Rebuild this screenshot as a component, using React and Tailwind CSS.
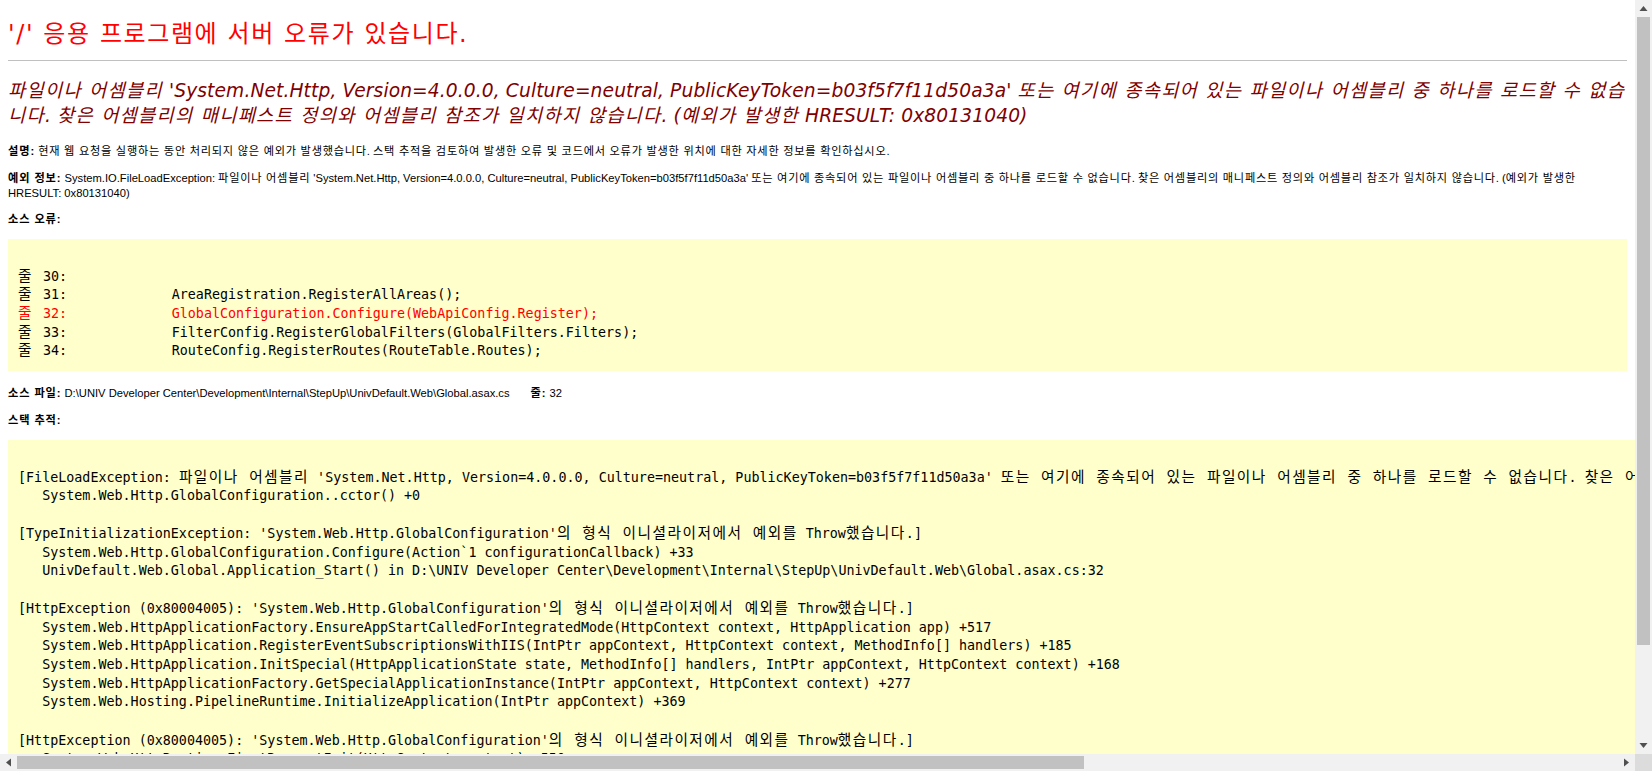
import { Fragment } from "react"

const sourceLines = [
  { text: "줄 30:  " },
  { text: "줄 31:             AreaRegistration.RegisterAllAreas();" },
  { text: "줄 32:             GlobalConfiguration.Configure(WebApiConfig.Register);", error: true },
  { text: "줄 33:             FilterConfig.RegisterGlobalFilters(GlobalFilters.Filters);" },
  { text: "줄 34:             RouteConfig.RegisterRoutes(RouteTable.Routes);" },
]

const stackLines = [
  "[FileLoadException: 파일이나 어셈블리 'System.Net.Http, Version=4.0.0.0, Culture=neutral, PublicKeyToken=b03f5f7f11d50a3a' 또는 여기에 종속되어 있는 파일이나 어셈블리 중 하나를 로드할 수 없습니다. 찾은 어셈블리의 매니페스트 정의와 어셈블리 참조가 일치하지 않습니다. (예외가 발생한 HRESULT: 0x80131040)]",
  "   System.Web.Http.GlobalConfiguration..cctor() +0",
  "",
  "[TypeInitializationException: 'System.Web.Http.GlobalConfiguration'의 형식 이니셜라이저에서 예외를 Throw했습니다.]",
  "   System.Web.Http.GlobalConfiguration.Configure(Action`1 configurationCallback) +33",
  "   UnivDefault.Web.Global.Application_Start() in D:\\UNIV Developer Center\\Development\\Internal\\StepUp\\UnivDefault.Web\\Global.asax.cs:32",
  "",
  "[HttpException (0x80004005): 'System.Web.Http.GlobalConfiguration'의 형식 이니셜라이저에서 예외를 Throw했습니다.]",
  "   System.Web.HttpApplicationFactory.EnsureAppStartCalledForIntegratedMode(HttpContext context, HttpApplication app) +517",
  "   System.Web.HttpApplication.RegisterEventSubscriptionsWithIIS(IntPtr appContext, HttpContext context, MethodInfo[] handlers) +185",
  "   System.Web.HttpApplication.InitSpecial(HttpApplicationState state, MethodInfo[] handlers, IntPtr appContext, HttpContext context) +168",
  "   System.Web.HttpApplicationFactory.GetSpecialApplicationInstance(IntPtr appContext, HttpContext context) +277",
  "   System.Web.Hosting.PipelineRuntime.InitializeApplication(IntPtr appContext) +369",
  "",
  "[HttpException (0x80004005): 'System.Web.Http.GlobalConfiguration'의 형식 이니셜라이저에서 예외를 Throw했습니다.]",
  "   System.Web.HttpRuntime.FirstRequestInit(HttpContext context) +550",
]

// the hangul in the reference is wider than Noto's, so runs of it get their own tracking
const Ko = ({ text, className }) =>
  text.split(/([\uac00-\ud7a3]+(?:\s+[\uac00-\ud7a3]+)*)/).map((part, i) =>
    i % 2 === 1 ? (
      <span key={i} className={className}>
        {part}
      </span>
    ) : (
      <Fragment key={i}>{part}</Fragment>
    )
  )

const CodeBlock = ({ lines, koClass, className }) => (
  <div className={`bg-[#ffffcc] pl-[10px] pt-[28px] font-['DejaVu_Sans_Mono','Noto_Sans_CJK_KR',monospace] text-[13.36px] ${className}`}>
    {lines.map((line, i) => (
      <div
        key={i}
        className={`leading-[18.67px] whitespace-pre ${line.tall ? "h-[19.3px]" : "h-[18.67px]"} ${line.error ? "text-[#ff0000]" : "text-black"}`}
      >
        <Ko text={line.text} className={koClass} />
      </div>
    ))}
  </div>
)

const Small = ({ label, text }) => (
  <>
    <b className="font-bold tracking-[0.9px]">{label}</b> <Ko text={text} className="tracking-[0.74px]" />
  </>
)

const Arrow = ({ d }) => (
  <svg width="9" height="9" viewBox="0 0 9 9" className="fill-[#505050]">
    <path d={d} />
  </svg>
)

export default function App() {
  return (
    <div className="flex flex-col h-screen w-full overflow-hidden bg-white font-['Liberation_Sans','Noto_Sans_CJK_KR',sans-serif] text-black">
      <div className="flex flex-1 min-h-0">
        <div className="flex-1 min-w-0 overflow-hidden px-2 pt-[20px]">
          <h1 className="font-['DejaVu_Sans','Noto_Sans_CJK_KR',sans-serif] text-[24px] leading-[28px] tracking-[1.6px] text-[#ff0000]">
            '/' 응용 프로그램에 서버 오류가 있습니다.
          </h1>
          <div className="h-px mt-[12px] bg-[#c0c0c0]" />
          <h2 className="mt-[17px] font-['DejaVu_Sans','Noto_Sans_CJK_KR',sans-serif] text-[18.67px] leading-[25.3px] tracking-[0.1px] italic text-[#800000]">
            <Ko
              className="tracking-[1.3px]"
              text="파일이나 어셈블리 'System.Net.Http, Version=4.0.0.0, Culture=neutral, PublicKeyToken=b03f5f7f11d50a3a' 또는 여기에 종속되어 있는 파일이나 어셈블리 중 하나를 로드할 수 없습니다. 찾은 어셈블리의 매니페스트 정의와 어셈블리 참조가 일치하지 않습니다. (예외가 발생한 HRESULT: 0x80131040)"
            />
          </h2>
          <div className="mt-[15px] flex flex-col text-[11.2px] leading-[15px]">
            <p>
              <Small label="설명:" text="현재 웹 요청을 실행하는 동안 처리되지 않은 예외가 발생했습니다. 스택 추적을 검토하여 발생한 오류 및 코드에서 오류가 발생한 위치에 대한 자세한 정보를 확인하십시오." />
            </p>
            <p className="mt-[12px]">
              <Small label="예외 정보:" text="System.IO.FileLoadException: 파일이나 어셈블리 'System.Net.Http, Version=4.0.0.0, Culture=neutral, PublicKeyToken=b03f5f7f11d50a3a' 또는 여기에 종속되어 있는 파일이나 어셈블리 중 하나를 로드할 수 없습니다. 찾은 어셈블리의 매니페스트 정의와 어셈블리 참조가 일치하지 않습니다. (예외가 발생한 HRESULT: 0x80131040)" />
            </p>
            <p className="mt-[11px]">
              <b className="font-bold tracking-[0.9px]">소스 오류:</b>
            </p>
          </div>
          <CodeBlock lines={sourceLines} koClass="text-[14.67px] tracking-[3.5px]" className="mt-[12px] h-[132px]" />
          <p className="mt-[15px] text-[11.2px] leading-[15px]">
            <Small label="소스 파일:" text="D:\UNIV Developer Center\Development\Internal\StepUp\UnivDefault.Web\Global.asax.cs" />
            <span className="ml-[21px]">
              <Small label="줄:" text="32" />
            </span>
          </p>
          <p className="mt-[12px] text-[11.2px] leading-[15px]">
            <b className="font-bold tracking-[0.9px]">스택 추적:</b>
          </p>
          <CodeBlock
            lines={stackLines.map((text) => ({ text, tall: /[\uac00-\ud7a3]/.test(text) }))}
            koClass="text-[14.67px] tracking-[1.5px]"
            className="mt-[12px] -mr-2 min-h-[400px]"
          />
        </div>
        <div className="flex flex-col items-center justify-between w-[17px] shrink-0 bg-[#f1f1f1]">
          <div className="flex items-center justify-center h-[17px] shrink-0">
            <Arrow d="M4.5 2 8.5 7H.5Z" />
          </div>
          <div className="w-[13px] flex-1 bg-[#c1c1c1] mb-[92px]" />
          <div className="flex items-center justify-center h-[17px] shrink-0">
            <Arrow d="M4.5 7 8.5 2H.5Z" />
          </div>
        </div>
      </div>
      <div className="flex items-center h-[17px] shrink-0 bg-[#f1f1f1]">
        <div className="flex items-center justify-center w-[17px] h-full shrink-0">
          <Arrow d="M2 4.5 7 .5V8.5Z" />
        </div>
        <div className="w-[1067px] h-[13px] bg-[#c1c1c1]" />
        <div className="flex-1" />
        <div className="flex items-center justify-center w-[17px] h-full shrink-0">
          <Arrow d="M7 4.5 2 .5V8.5Z" />
        </div>
        <div className="w-[17px] h-full shrink-0 bg-[#dcdcdc]" />
      </div>
    </div>
  )
}
